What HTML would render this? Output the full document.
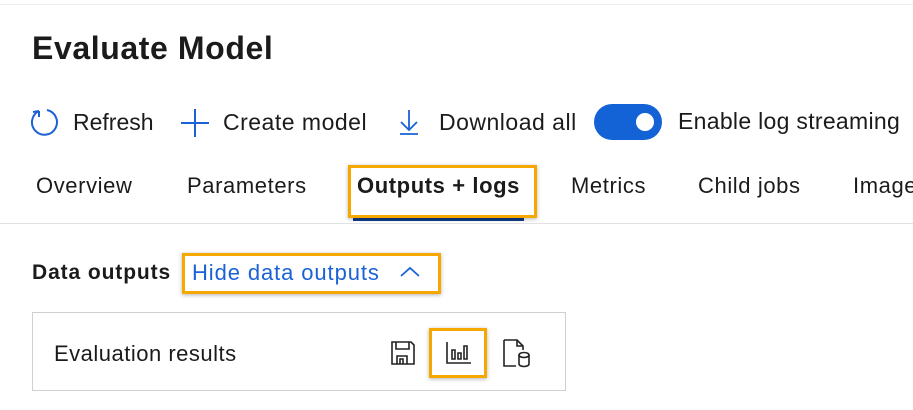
<!DOCTYPE html>
<html><head><style>
body{margin:0;width:913px;height:410px;background:#fff;font-family:"Segoe UI","Liberation Sans",sans-serif;color:#1b1b1b;position:relative;overflow:hidden}
.a{position:absolute;white-space:nowrap}
.ob{position:absolute;border:3px solid #f5a800;box-sizing:border-box;box-shadow:0 1px 4px rgba(0,0,0,.3)}
.t{font-size:22px;letter-spacing:0.6px;top:173px}
</style></head><body>
<div class="a" style="left:0;top:4px;width:913px;height:1px;background:#eee"></div>
<div class="a" style="left:32px;top:30px;font-size:32px;font-weight:600;letter-spacing:0.6px">Evaluate Model</div>
<svg class="a" style="left:30px;top:107px" width="30" height="30" viewBox="0 0 30 30"><path d="M9 4 A12.5 12.5 0 1 0 17 3" fill="none" stroke="#1a62d6" stroke-width="2"/><path d="M9 4 L9 10 M9 4 L3 5" stroke="#1a62d6" stroke-width="2" fill="none"/></svg>
<div class="a" style="left:73px;top:109px;font-size:23px">Refresh</div>
<svg class="a" style="left:180px;top:108px" width="30" height="30"><path d="M15 1V29M1 15H29" stroke="#1a62d6" stroke-width="2"/></svg>
<div class="a" style="left:223px;top:109px;font-size:23px;letter-spacing:0.5px">Create model</div>
<svg class="a" style="left:398px;top:108px" width="22" height="28"><path d="M11 2V22M3 14L11 22L19 14M2 26H20" stroke="#1a62d6" stroke-width="1.8" fill="none"/></svg>
<div class="a" style="left:439px;top:109px;font-size:23px;letter-spacing:0.5px">Download all</div>
<div class="a" style="left:594px;top:104px;width:68px;height:36px;border-radius:18px;background:#1463d6"><div style="position:absolute;right:8px;top:9px;width:18px;height:18px;border-radius:50%;background:#fff"></div></div>
<div class="a" style="left:678px;top:108px;font-size:23px;letter-spacing:0.3px">Enable log streaming</div>
<div class="a t" style="left:36px">Overview</div>
<div class="a t" style="left:187px">Parameters</div>
<div class="a t" style="left:357px;font-weight:600">Outputs + logs</div>
<div class="a t" style="left:571px">Metrics</div>
<div class="a t" style="left:698px">Child jobs</div>
<div class="a t" style="left:853px">Images</div>
<div class="a" style="left:353px;top:217px;width:171px;height:4px;background:#0f3c8c"></div>
<div class="ob" style="left:348px;top:165px;width:189px;height:53px"></div>
<div class="a" style="left:0;top:223px;width:913px;height:1px;background:#e1e1e1"></div>
<div class="a" style="left:32px;top:261px;font-size:21px;font-weight:600;letter-spacing:0.9px">Data outputs</div>
<div class="a" style="left:192px;top:260px;font-size:22px;letter-spacing:0.9px;color:#1a62d6">Hide data outputs</div>
<svg class="a" style="left:398px;top:264px" width="24" height="16"><path d="M3 12L12 4L21 12" stroke="#1a62d6" stroke-width="1.8" fill="none"/></svg>
<div class="ob" style="left:182px;top:253px;width:259px;height:41px"></div>
<div class="a" style="left:32px;top:312px;width:532px;height:77px;border:1px solid #d0d0d0"></div>
<div class="a" style="left:54px;top:341px;font-size:22px;letter-spacing:0.5px">Evaluation results</div>
<svg class="a" style="left:390px;top:340px" width="26" height="26" viewBox="0 0 26 26" fill="none" stroke="#222" stroke-width="1.6"><path d="M2 2H21L24 5V24H2Z M6 2V9H19V2 M7 24V16H17V24 M10 24V19H13V24"/></svg>
<svg class="a" style="left:445px;top:340px" width="28" height="26" fill="none" stroke="#222" stroke-width="1.6"><path d="M2 2V23H26 M7 10V19H10V10Z M13 13V19H16V13Z M19 6V19H22V6Z"/></svg>
<div class="ob" style="left:429px;top:328px;width:58px;height:50px"></div>
<svg class="a" style="left:502px;top:338px" width="30" height="30" fill="none" stroke="#222" stroke-width="1.6"><path d="M2 2H15L21 8V12 M15 2V8H21 M2 2V28H14"/><ellipse cx="22" cy="17" rx="5" ry="2.5"/><path d="M17 17V26A5 2.5 0 0 0 27 26V17"/></svg>
</body></html>
